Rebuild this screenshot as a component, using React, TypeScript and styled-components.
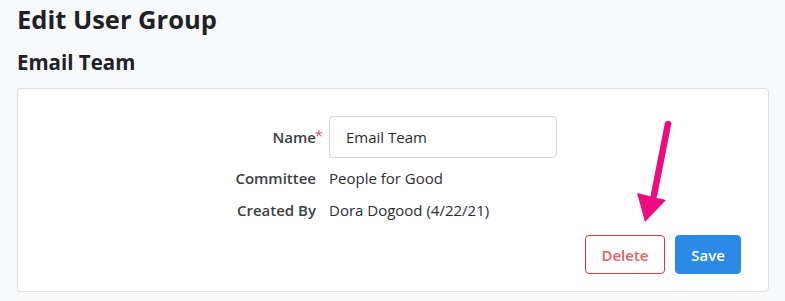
import React from "react";
import styled, { createGlobalStyle } from "styled-components";

const Global = createGlobalStyle`
  html, body { margin: 0; padding: 0; background: #f8f9fb; }
  body { font-family: "Open Sans", "Noto Sans", sans-serif; color: #212529; }
  * { box-sizing: border-box; }
`;

const Page = styled.div`
  padding: 0 17px;
  position: relative;
  width: 785px;
  height: 301px;
`;

const Title = styled.h1`
  margin: 0;
  padding-top: 2px;
  font-size: 25.5px;
  font-weight: 700;
  line-height: 34px;
  color: #1e2125;
`;

const Subtitle = styled.h2`
  margin: 0;
  padding-top: 12px;
  font-size: 20.5px;
  font-weight: 700;
  line-height: 28px;
  color: #1e2125;
`;

const Card = styled.div`
  margin-top: 12px;
  background: #fff;
  border: 1px solid #dcdee2;
  border-radius: 4px;
  padding: 27px 27px 17px 0;
  width: 752px;
`;

const FormGrid = styled.div`
  display: grid;
  grid-template-columns: 298px 228px;
  column-gap: 13px;
  row-gap: 8px;
  align-items: center;
`;

const Label = styled.div`
  text-align: right;
  font-size: 15px;
  font-weight: 600;
  line-height: 24px;
  color: #3a3f44;
  position: relative;
`;

const Req = styled.span`
  position: absolute;
  right: -7px;
  top: -2px;
  color: #e0556a;
  font-weight: 400;
`;

const Value = styled.div`
  font-size: 15px;
  line-height: 24px;
  color: #2a2e33;
  white-space: nowrap;
`;

const Input = styled.input`
  width: 228px;
  height: 42px;
  border: 1px solid #d4d7db;
  border-radius: 4px;
  padding: 0 16px;
  font-family: inherit;
  font-size: 15px;
  color: #2a2e33;
  outline: none;
`;

const Actions = styled.div`
  display: flex;
  justify-content: flex-end;
  gap: 10px;
  margin-top: 13px;
`;

const Button = styled.button<{ $variant: "danger" | "primary" }>`
  height: 39px;
  padding: 0;
  border-radius: 4px;
  font-family: inherit;
  font-size: 15px;
  font-weight: 600;
  cursor: pointer;
  border: 1px solid ${(p) => (p.$variant === "danger" ? "#d9363e" : "#2b8ae5")};
  background: ${(p) => (p.$variant === "danger" ? "#fff" : "#2b8ae5")};
  color: ${(p) => (p.$variant === "danger" ? "#e25f63" : "#fff")};
  width: ${(p) => (p.$variant === "danger" ? "80px" : "66px")};
`;

const Arrow = styled.svg`
  position: absolute;
  left: 630px;
  top: 115px;
  pointer-events: none;
`;

export default function App() {
  return (
    <Page>
      <Global />
      <Title>Edit User Group</Title>
      <Subtitle>Email Team</Subtitle>
      <Card>
        <FormGrid>
          <Label>
            Name<Req>*</Req>
          </Label>
          <Input defaultValue="Email Team" />
          <Label>Committee</Label>
          <Value>People for Good</Value>
          <Label>Created By</Label>
          <Value>Dora Dogood (4/22/21)</Value>
        </FormGrid>
        <Actions>
          <Button $variant="danger">Delete</Button>
          <Button $variant="primary">Save</Button>
        </Actions>
      </Card>
      <Arrow width="50" height="115" viewBox="0 0 50 115">
        <line x1="38" y1="9" x2="24" y2="80" stroke="#ec0c7f" strokeWidth="6.5" strokeLinecap="round" />
        <polygon points="7,78 36,85 15,107" fill="#ec0c7f" />
      </Arrow>
    </Page>
  );
}
